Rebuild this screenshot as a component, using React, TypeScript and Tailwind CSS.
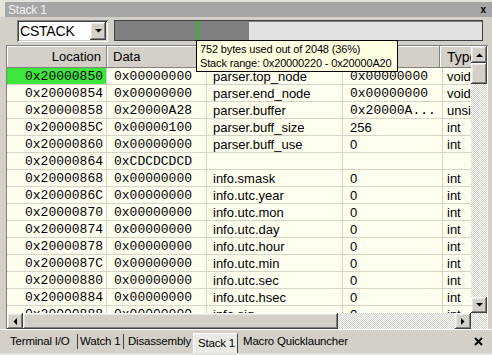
import React from "react";

const SANS = { fontFamily: '"Liberation Sans", Arial, sans-serif' };
const MONO = { fontFamily: '"Liberation Mono", "Courier New", monospace' };

type Row = { loc: string; data: string; name: string; value: string; vmono?: boolean; type: string };

const rows: Row[] = [
  { loc: "0x20000850", data: "0x00000000", name: "parser.top_node", value: "0x00000000", vmono: true, type: "void" },
  { loc: "0x20000854", data: "0x00000000", name: "parser.end_node", value: "0x00000000", vmono: true, type: "void" },
  { loc: "0x20000858", data: "0x20000A28", name: "parser.buffer", value: "0x20000A...", vmono: true, type: "unsi" },
  { loc: "0x2000085C", data: "0x00000100", name: "parser.buff_size", value: "256", type: "int" },
  { loc: "0x20000860", data: "0x00000000", name: "parser.buff_use", value: "0", type: "int" },
  { loc: "0x20000864", data: "0xCDCDCDCD", name: "", value: "", type: "" },
  { loc: "0x20000868", data: "0x00000000", name: "info.smask", value: "0", type: "int" },
  { loc: "0x2000086C", data: "0x00000000", name: "info.utc.year", value: "0", type: "int" },
  { loc: "0x20000870", data: "0x00000000", name: "info.utc.mon", value: "0", type: "int" },
  { loc: "0x20000874", data: "0x00000000", name: "info.utc.day", value: "0", type: "int" },
  { loc: "0x20000878", data: "0x00000000", name: "info.utc.hour", value: "0", type: "int" },
  { loc: "0x2000087C", data: "0x00000000", name: "info.utc.min", value: "0", type: "int" },
  { loc: "0x20000880", data: "0x00000000", name: "info.utc.sec", value: "0", type: "int" },
  { loc: "0x20000884", data: "0x00000000", name: "info.utc.hsec", value: "0", type: "int" },
  { loc: "0x20000888", data: "0x00000000", name: "info.sig", value: "0", type: "int" },
];

const raised =
  "bg-[#d4d0c8] shadow-[inset_-1px_-1px_#404040,inset_1px_1px_#ffffff,inset_-2px_-2px_#808080,inset_2px_2px_#e8e6e0]";
const checker =
  "bg-[repeating-conic-gradient(#ffffff_0%_25%,#d4d0c8_0%_50%)] bg-[length:2px_2px]";
const hdr = "shrink-0 flex items-center shadow-[inset_-1px_-1px_#808080,inset_1px_1px_#ffffff]";

function Tri({ dir }: { dir: "up" | "down" | "left" | "right" }) {
  const pts: Record<string, string> = {
    up: "0,4 7,4 3.5,0.5",
    down: "0,0 7,0 3.5,3.5",
    left: "4,0 4,7 0.5,3.5",
    right: "0,0 0,7 3.5,3.5",
  };
  const vertical = dir === "up" || dir === "down";
  return (
    <svg width={vertical ? 7 : 4} height={vertical ? 4 : 7} viewBox={vertical ? "0 0 7 4" : "0 0 4 7"}>
      <polygon points={pts[dir]} fill="#000" />
    </svg>
  );
}

function Btn({ dir, className }: { dir: "up" | "down" | "left" | "right"; className: string }) {
  return (
    <div className={`${raised} ${className} flex items-center justify-center shrink-0`}>
      <Tri dir={dir} />
    </div>
  );
}

const cellB = "border-r border-b border-[#d6d3c7] h-full flex items-center shrink-0 overflow-hidden whitespace-nowrap";

export default function App() {
  return (
    <div className="relative w-[492px] h-[355px] bg-[#d4d0c8] flex flex-col overflow-hidden text-black" style={SANS}>
      {/* title bar */}
      <div className="h-[2px] bg-[#e4e2dc]" />
      <div className="flex h-[15px]">
        <div className="w-[5px] bg-[#e4e2dc]" />
        <div className="flex-1 bg-[#a6a6a6] flex items-center justify-between pl-[3px] pr-[6px]">
          <span className="text-[12px] text-[#f2f2f2] leading-none tracking-[-0.2px]">Stack 1</span>
          <span className="text-[10px] font-bold leading-none">x</span>
        </div>
      </div>
      {/* toolbar */}
      <div className="h-[28px] flex items-start pt-[3px] pl-[17px] gap-[6px]">
        <div className="w-[91px] h-[22px] bg-white flex items-center shadow-[inset_1px_1px_#808080,inset_-1px_-1px_#ffffff,inset_2px_2px_#404040,inset_-2px_-2px_#d4d0c8] pl-[3px] pr-[2px]">
          <span className="flex-1 text-[14px] leading-none tracking-[-0.2px]">CSTACK</span>
          <Btn dir="down" className="w-[16px] h-[18px]" />
        </div>
        <div className="w-[369px] h-[21px] border border-[#404040] shadow-[inset_1px_1px_#808080] flex bg-[#e2e2e2]">
          <div className="w-[134px] h-full bg-[#808080] relative">
            <div className="absolute left-[82px] top-0 w-[2px] h-full bg-[#19c819]" />
          </div>
        </div>
      </div>
      {/* table frame */}
      <div className="ml-[6px] w-[482px] h-[284px] border-l border-t border-[#808080] flex">
        <div className="w-[464px] flex flex-col">
          <div className="h-[267px] overflow-hidden bg-[#fffff0] text-[13px]">
            {/* header */}
            <div className="flex h-[22px] bg-[#d4d0c8] w-[600px]">
              <div className={`${hdr} w-[100px] justify-end pr-[6px]`}>Location</div>
              <div className={`${hdr} w-[100px] pl-[6px]`}>Data</div>
              <div className={`${hdr} w-[136px]`} />
              <div className={`${hdr} w-[97px]`} />
              <div className={`${hdr} w-[100px] pl-[7px] text-[14px]`}>Type</div>
            </div>
            {rows.map((r, i) => (
              <div key={r.loc} className="flex h-[17px] w-[600px] leading-none">
                <div className={`${cellB} w-[100px] justify-end pr-[3px] ${i === 0 ? "bg-[#3ce63c]" : ""}`} style={MONO}>{r.loc}</div>
                <div className={`${cellB} w-[100px] pl-[7px]`} style={MONO}>{r.data}</div>
                <div className={`${cellB} w-[136px] pl-[6px]`}>{r.name}</div>
                <div className={`${cellB} w-[100px] pl-[7px]`} style={r.vmono ? MONO : undefined}>{r.value}</div>
                <div className={`${cellB} w-[100px] pl-[4px]`}>{r.type}</div>
              </div>
            ))}
          </div>
          {/* horizontal scrollbar */}
          <div className={`h-[16px] flex ${checker}`}>
            <Btn dir="left" className="w-[16px] h-[16px]" />
            <div className={`w-[315px] h-[16px] ${raised}`} />
            <div className="flex-1" />
            <Btn dir="right" className="w-[16px] h-[16px]" />
          </div>
        </div>
        {/* vertical scrollbar */}
        <div className={`w-[16px] flex flex-col ${checker}`}>
          <Btn dir="up" className="w-[16px] h-[17px]" />
          <div className={`w-[16px] h-[21px] shrink-0 ${raised}`} />
          <div className="flex-1" />
          <Btn dir="down" className="w-[16px] h-[16px]" />
          <div className="h-[16px] shrink-0" />
        </div>
        <div className="w-[1px] bg-[#ffffff]" />
      </div>
      {/* tabs */}
      <div className="h-[1px] bg-white" />
      <div className="h-[23px] flex items-stretch text-[11.5px] tracking-[-0.2px] relative">
        <div className="w-[77px] pl-[10px] flex items-center shrink-0 whitespace-nowrap">Terminal I/O</div>
        <div className="w-[1px] my-[4px] bg-[#404040]" />
        <div className="w-[45px] pl-[2px] flex items-center shrink-0 whitespace-nowrap">Watch 1</div>
        <div className="w-[1px] my-[4px] bg-[#404040]" />
        <div className="w-[69px] pl-[4px] flex items-center shrink-0 whitespace-nowrap">Disassembly</div>
        <div className="w-[45px] mt-[3px] pl-[4px] flex items-center shrink-0 whitespace-nowrap bg-[#eceae4] border-t border-l border-white border-r border-r-[#404040]">Stack 1</div>
        <div className="pl-[5px] flex items-center shrink-0 whitespace-nowrap">Macro Quicklauncher</div>
        <div className="flex-1" />
        <div className="pr-[9px] flex items-center">
          <svg width="9" height="9" viewBox="0 0 9 9">
            <path d="M1 1 L8 8 M8 1 L1 8" stroke="#000" strokeWidth="2" />
          </svg>
        </div>
      </div>
      <div className="flex-1 bg-[#e4e2dc]" />

      {/* tooltip */}
      <div className="absolute left-[196px] top-[40px] w-[202px] h-[32px] bg-[#ffffe1] border border-black px-[3px] pt-[1px] text-[11px] leading-[14px] tracking-[-0.15px] whitespace-nowrap">
        <div>752 bytes used out of 2048 (36%)</div>
        <div>Stack range: 0x20000220 - 0x20000A20</div>
      </div>
    </div>
  );
}
